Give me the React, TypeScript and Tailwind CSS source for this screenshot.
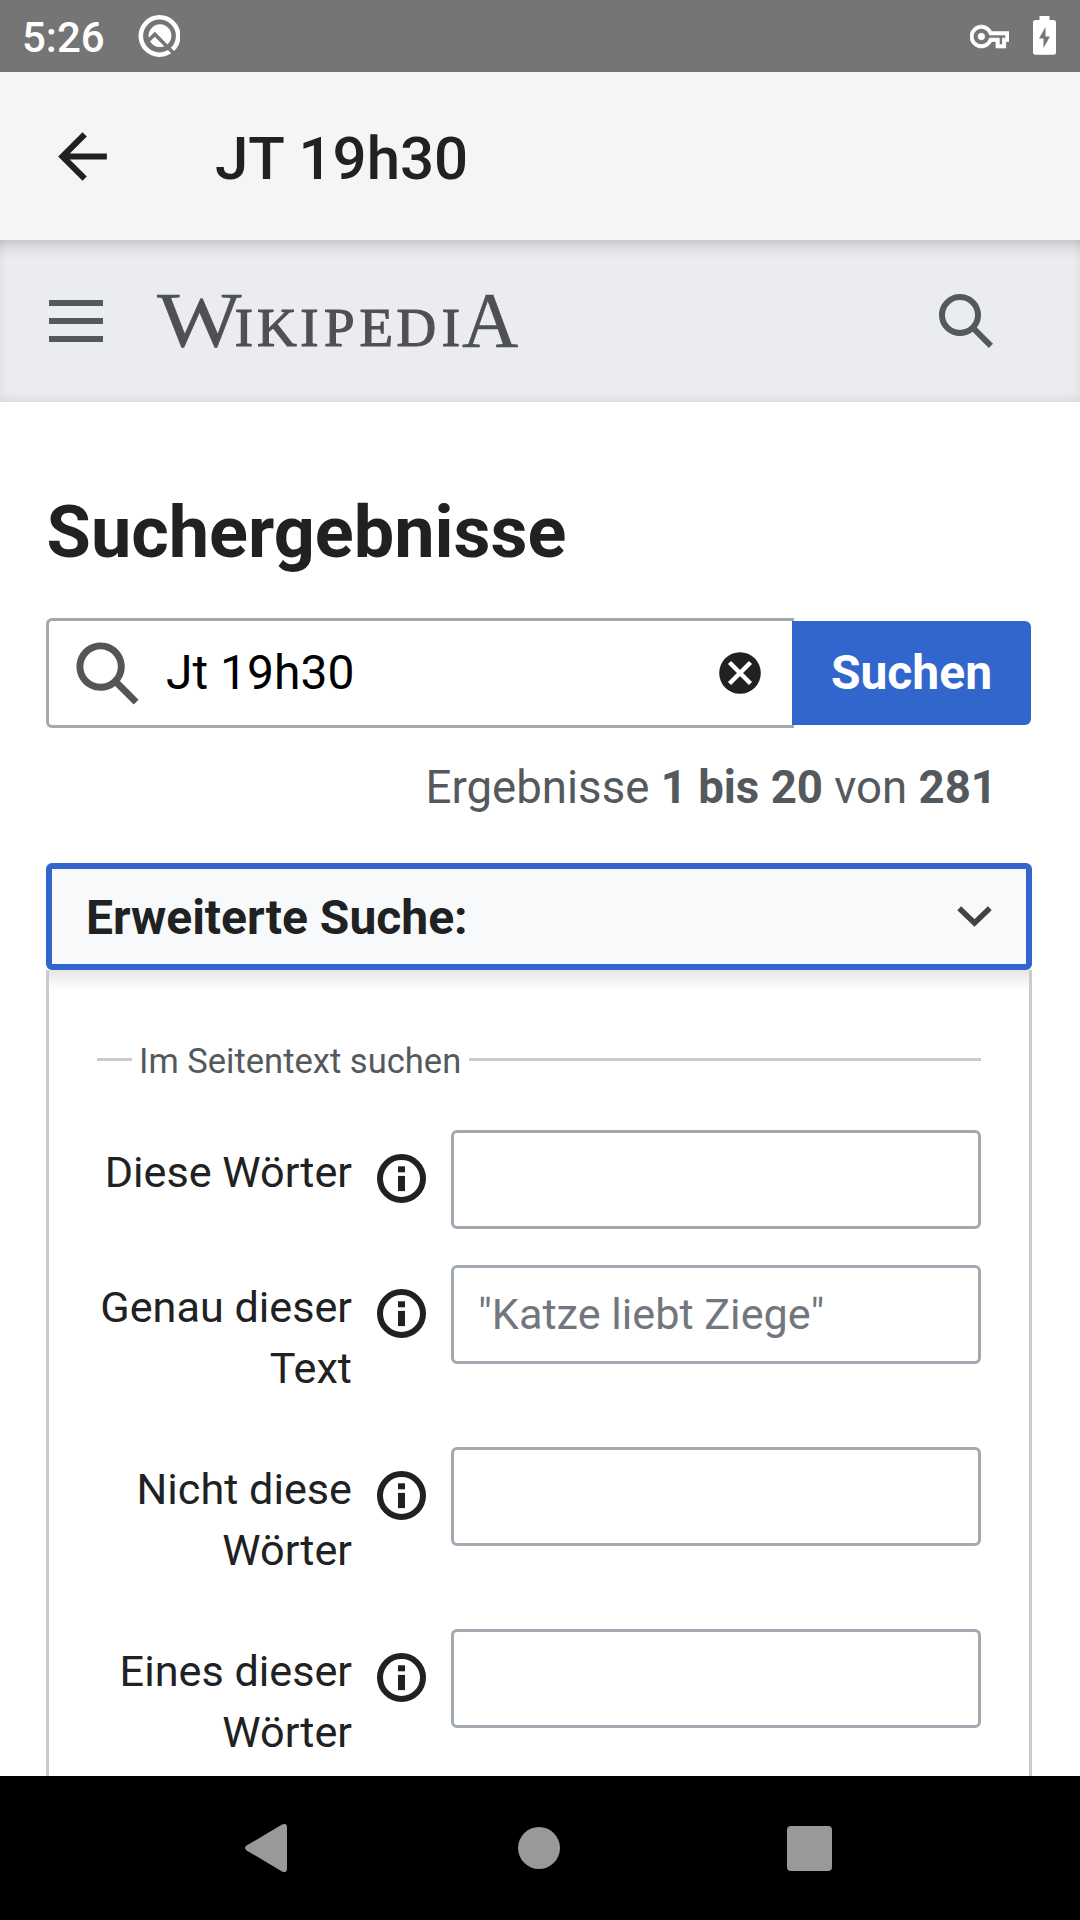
import React from "react";

function SearchIcon({ className }: { className: string }) {
  return (
    <svg viewBox="0 0 20 20" className={className} fill="currentColor">
      <path
        fillRule="evenodd"
        d="M12.2 13.6a7 7 0 1 1 1.4-1.4l5.4 5.4-1.4 1.4zM3 8a5 5 0 1 0 10 0A5 5 0 0 0 3 8z"
      />
    </svg>
  );
}

function InfoIcon() {
  return (
    <svg viewBox="0 0 50 50" className="h-[50px] w-[50px] shrink-0">
      <circle cx="25.500" cy="24.500" r="21.500" fill="none" stroke="#202122" strokeWidth="6" />
      <rect x="22" y="12.300" width="7" height="6" fill="#202122" />
      <rect x="22" y="21.900" width="7" height="15.200" fill="#202122" />
    </svg>
  );
}

function StatusBar() {
  return (
    <div className="flex h-[72px] shrink-0 items-start bg-[#757575] text-white">
      <span className="ml-[22px] mt-[13px] w-[116px] text-[42px] leading-[50px] font-medium">5:26</span>
      <svg viewBox="0 0 42 42" className="mt-[15px] h-[42px] w-[42px]">
        <circle cx="21.500" cy="21" r="18.700" fill="none" stroke="#fff" strokeWidth="4.600" />
        <circle cx="22" cy="20.700" r="11.400" fill="#fff" />
        <path d="M8 28L16.800 19.200L38 40.400" fill="none" stroke="#757575" strokeWidth="3.600" />
      </svg>
      <svg viewBox="0 0 24 24" className="mt-[17px] ml-[790px] h-[39px] w-[39px]" fill="#fff" stroke="#fff" strokeWidth="0.500">
        <path d="M22 19h-6v-4h-2.68c-1.14 2.42-3.6 4-6.32 4-3.86 0-7-3.14-7-7s3.14-7 7-7c2.72 0 5.17 1.58 6.32 4H24v6h-2v4zm-4-2h2v-4h2v-2H11.94l-.23-.67C11.01 8.34 9.11 7 7 7c-2.76 0-5 2.24-5 5s2.24 5 5 5c2.11 0 4.01-1.34 4.71-3.33l.23-.67H18v4z" />
        <circle cx="7" cy="12" r="2" />
      </svg>
      <svg viewBox="0 0 23 39" className="mt-[16px] ml-[24px] h-[39px] w-[23px]">
        <path
          fillRule="evenodd"
          fill="#fff"
          d="M6.500 0h10v4H20.500a2.500 2.500 0 0 1 2.500 2.500v29.700a2.500 2.500 0 0 1-2.500 2.500h-18A2.500 2.500 0 0 1 0 36.200V6.500A2.500 2.500 0 0 1 2.500 4h4zM12.500 11L6 22.500h4.500V32L17 20.500h-4.500z"
        />
      </svg>
    </div>
  );
}

function AppBar() {
  return (
    <div className="flex h-[168px] shrink-0 items-center bg-[#f5f5f5] text-[#212121]">
      <svg viewBox="0 0 24 24" className="ml-[46px] h-[73px] w-[73px]" fill="currentColor">
        <path d="M20 11H7.830l5.590-5.590L12 4l-8 8 8 8 1.410-1.410L7.830 13H20v-2z" />
      </svg>
      <h1 className="ml-[96px] mt-[6px] text-[60px] leading-[70px] font-medium">JT 19h30</h1>
    </div>
  );
}

function Wordmark() {
  return (
    <svg
      viewBox="0 0 380 100"
      className="ml-[54px] h-[100px] w-[380px] overflow-visible"
      fill="#4f5052"
      stroke="#4f5052"
      strokeWidth="1.200"
      fontFamily="'Liberation Serif', serif"
    >
      <text y="75" fontSize="55">
        <tspan x="0" fontSize="78" strokeWidth="0.400" textLength="84.500" lengthAdjust="spacingAndGlyphs">W</tspan>
        <tspan x="77.700">I</tspan>
        <tspan x="100">K</tspan>
        <tspan x="143.300">I</tspan>
        <tspan x="167">P</tspan>
        <tspan x="202.500">E</tspan>
        <tspan x="239.500">D</tspan>
        <tspan x="284.700">I</tspan>
        <tspan x="305" fontSize="78" strokeWidth="0.400">A</tspan>
      </text>
    </svg>
  );
}

function WikiHeader() {
  return (
    <header className="relative flex h-[162px] shrink-0 items-center bg-[#eaecf0] text-[#54595d] shadow-[inset_0_-3px_9px_rgba(0,0,0,0.08)]">
      <div className="absolute inset-x-0 top-0 h-[20px] bg-linear-to-b from-black/14 via-black/4 to-transparent" />
      <div className="ml-[49px] flex w-[54px] flex-col gap-[12px]">
        <span className="h-[6px] bg-[#54595d]" />
        <span className="h-[6px] bg-[#54595d]" />
        <span className="h-[6px] bg-[#54595d]" />
      </div>
      <Wordmark />
      <SearchIcon className="ml-auto mr-[84px] h-[60px] w-[60px]" />
    </header>
  );
}

function SearchForm() {
  return (
    <div className="mt-[42px] flex h-[110px] items-center">
      <div className="flex h-[110px] w-[748px] shrink-0 items-center rounded-l-[6px] border-y-3 border-l-3 border-[#a2a9b1]">
        <SearchIcon className="ml-[24px] h-[69px] w-[69px] text-[#555555]" />
        <span className="ml-[24px] text-[48px] leading-[60px] text-black">Jt 19h30</span>
        <svg viewBox="0 0 42 42" className="ml-auto mr-[33px] h-[42px] w-[42px]">
          <circle cx="21" cy="21" r="20.800" fill="#202122" />
          <path d="M10.500 10.500l21 21M31.500 10.500L10.500 31.500" stroke="#fff" strokeWidth="4.500" />
        </svg>
      </div>
      <button className="relative -ml-[2px] h-[104px] w-[239px] rounded-r-[6px] bg-[#3366cc] text-[48px] font-bold text-white">
        Suchen
      </button>
    </div>
  );
}

const fields = [
  { label: "Diese Wörter", placeholder: "", height: "h-[135px]" },
  { label: "Genau dieser Text", placeholder: '"Katze liebt Ziege"', height: "h-[182px]" },
  { label: "Nicht diese Wörter", placeholder: "", height: "h-[182px]" },
  { label: "Eines dieser Wörter", placeholder: "", height: "h-[182px]" },
];

function AdvancedSearch() {
  return (
    <section className="mt-[45px] flex min-h-0 grow flex-col">
      <button className="flex h-[107px] shrink-0 items-center justify-between rounded-[6px] border-6 border-[#3366cc] bg-[#f8f9fb] pr-[34px] pl-[34px]">
        <span className="mt-[2px] text-[48px] leading-[60px] font-bold">Erweiterte Suche:</span>
        <svg viewBox="0 0 35 21" className="h-[21px] w-[35px]" fill="none" stroke="#404244" strokeWidth="5.500">
          <path d="M2.200 2.200L17.500 17L32.800 2.200" />
        </svg>
      </button>
      <div className="min-h-0 grow border-x-3 border-[#c8ccd1]">
        <div className="h-[20px] bg-linear-to-b from-[#e5e5e5] to-white" />
        <div className="mt-[47px] mr-[48px] ml-[48px] flex items-center">
          <span className="h-[3px] w-[35px] bg-[#c8ccd1]" />
          <span className="mt-[4px] pr-[8px] pl-[7px] text-[34.56px] leading-[40px] text-[#54595d]">Im Seitentext suchen</span>
          <span className="h-[3px] grow bg-[#c8ccd1]" />
        </div>
        <div className="mt-[49px] mr-[48px]">
          {fields.map((f) => (
            <div key={f.label} className={`flex items-start ${f.height}`}>
              <label className="mt-[12px] w-[303px] pl-[40px] text-right text-[43.2px] leading-[61px]">{f.label}</label>
              <div className="mt-[24px] ml-[24px]">
                <InfoIcon />
              </div>
              <input
                placeholder={f.placeholder}
                className="ml-auto h-[99px] w-[530px] rounded-[6px] border-3 border-[#a2a9b1] px-[24px] text-[43.2px] placeholder:text-[#72777d]"
              />
            </div>
          ))}
        </div>
      </div>
    </section>
  );
}

function NavBar() {
  return (
    <nav className="flex h-[144px] shrink-0 items-center bg-black pl-[245px]">
      <svg viewBox="0 0 42 48" className="h-[48px] w-[42px]" fill="#999">
        <path d="M1.200 21.800L37 .6Q42-1.500 42 3.500V44.500Q42 49.500 37 47.400L1.200 26.200Q-1 24 1.200 21.800z" />
      </svg>
      <span className="ml-[231px] h-[42px] w-[42px] rounded-full bg-[#999]" />
      <span className="ml-[227px] h-[45px] w-[45px] rounded-[4px] bg-[#999]" />
    </nav>
  );
}

export default function App() {
  return (
    <div className="flex h-[1920px] w-[1080px] flex-col overflow-hidden bg-white font-['Roboto',sans-serif] text-[#202122]">
      <StatusBar />
      <AppBar />
      <WikiHeader />
      <main className="flex min-h-0 grow flex-col overflow-hidden pr-[48px] pl-[46px]">
        <h2 className="mt-[88px] pl-[0.600px] text-[72px] leading-[86px] font-bold">Suchergebnisse</h2>
        <SearchForm />
        <p className="mt-[30px] pr-[35px] text-right text-[45.6px] leading-[60px] text-[#54595d]">
          Ergebnisse <b>1 bis 20</b> von <b>281</b>
        </p>
        <AdvancedSearch />
      </main>
      <NavBar />
    </div>
  );
}
